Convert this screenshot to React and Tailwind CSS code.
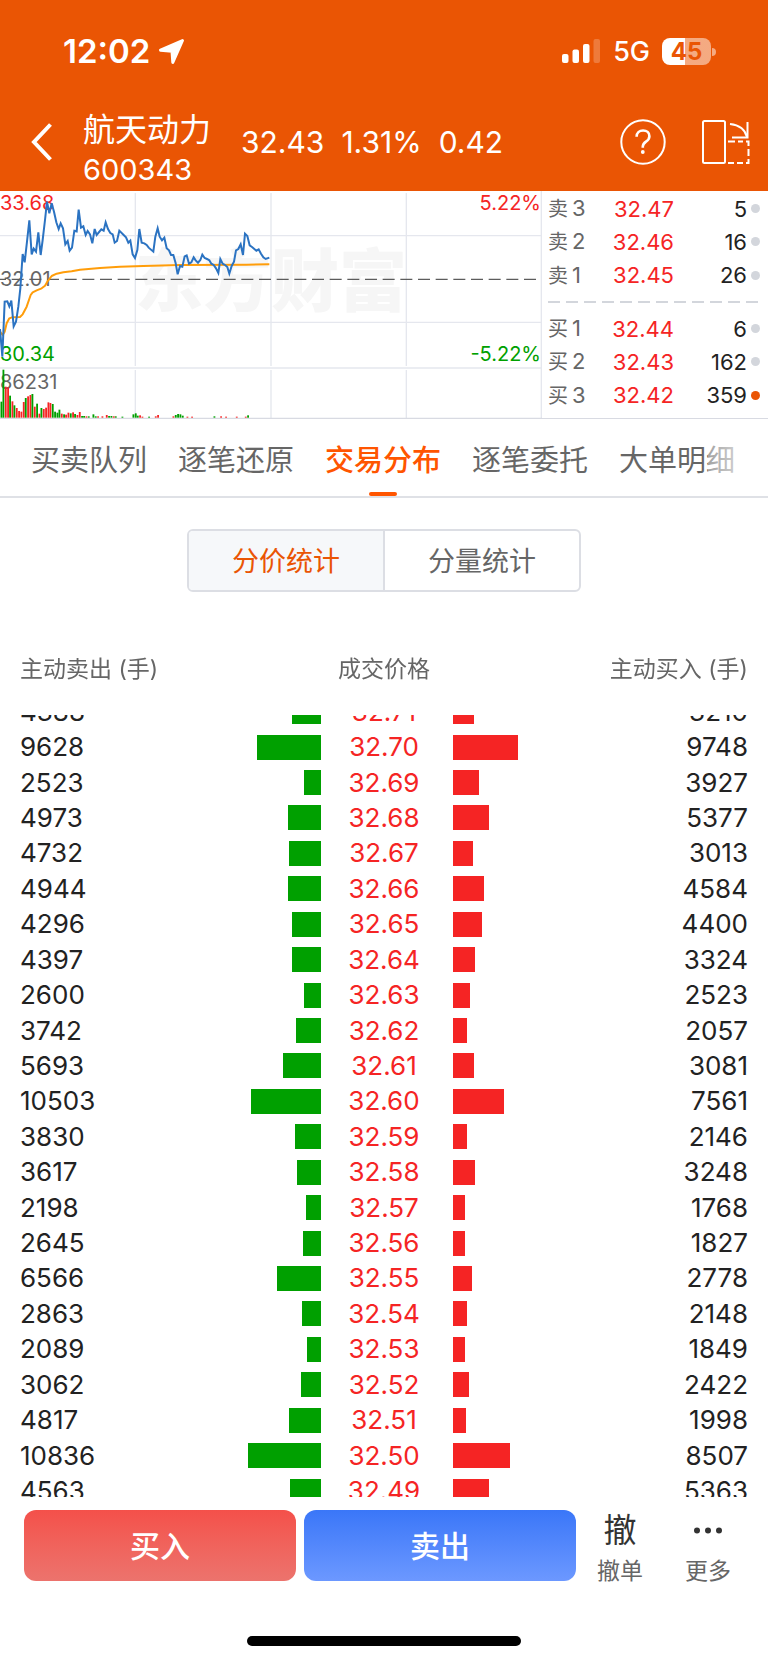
import { useLayoutEffect, useRef, useState } from 'react';

const asks = [
  { label: '卖', level: 3, price: '32.47', qty: 5 },
  { label: '卖', level: 2, price: '32.46', qty: 16 },
  { label: '卖', level: 1, price: '32.45', qty: 26 },
];

const bids = [
  { label: '买', level: 1, price: '32.44', qty: 6 },
  { label: '买', level: 2, price: '32.43', qty: 162 },
  { label: '买', level: 3, price: '32.42', qty: 359, active: true },
];

const tabs = ['买卖队列', '逐笔还原', '交易分布', '逐笔委托', '大单明细'];
const modes = ['分价统计', '分量统计'];

// [active sell, price, active buy]
const rows = [
  [4388, '32.71', 3210],
  [9628, '32.70', 9748],
  [2523, '32.69', 3927],
  [4973, '32.68', 5377],
  [4732, '32.67', 3013],
  [4944, '32.66', 4584],
  [4296, '32.65', 4400],
  [4397, '32.64', 3324],
  [2600, '32.63', 2523],
  [3742, '32.62', 2057],
  [5693, '32.61', 3081],
  [10503, '32.60', 7561],
  [3830, '32.59', 2146],
  [3617, '32.58', 3248],
  [2198, '32.57', 1768],
  [2645, '32.56', 1827],
  [6566, '32.55', 2778],
  [2863, '32.54', 2148],
  [2089, '32.53', 1849],
  [3062, '32.52', 2422],
  [4817, '32.51', 1998],
  [10836, '32.50', 8507],
  [4563, '32.49', 5363],
];
const MAX_VOLUME = 22400;

const priceLine =
  '0,432 7,515 14,350 22,349 28,364 34,347 41,424 48,410 55,365 61,310 68,207 74,232 81,170 88,106 95,208 101,191 108,200 115,142 122,210 128,165 135,105 141,50 148,85 155,55 162,80 169,112 176,132 182,115 189,130 196,178 203,168 209,197 216,188 223,137 230,139 236,74 243,128 250,124 257,150 263,138 270,148 277,175 284,132 290,150 304,133 311,137 317,112 324,132 331,144 338,148 344,173 351,168 358,137 371,150 378,157 385,173 391,167 398,208 405,219 412,195 418,132 425,173 433,175 440,180 446,188 460,200 466,155 473,130 479,155 486,166 493,158 500,190 507,196 513,210 520,210 527,235 533,268 540,243 547,245 554,214 560,211 567,236 574,232 581,217 587,226 594,233 601,225 607,209 614,219 621,222 628,226 634,236 641,240 648,250 655,264 661,222 668,236 675,240 682,246 688,266 695,243 702,230 708,196 715,192 722,178 729,210 735,146 742,153 749,181 756,186 763,192 769,197 776,193 783,206 790,217 797,222 808,218';
const averageLine =
  '0,440 8,450 14,440 20,415 28,400 36,397 60,396 68,388 80,365 92,330 98,322 110,316 125,310 135,302 142,290 155,273 170,266 190,262 215,259 240,254 300,249 360,245 430,243 540,240 740,239 808,238';

// direction, x, height
const volumes =
  'g4,48 g10,144 r17,93 r24,91 g30,66 r37,49 g43,37 r50,29 r57,20 r64,18 r71,47 g77,59 r84,64 r91,68 g97,71 r104,33 g111,42 r118,12 g124,29 r131,26 r138,30 r145,46 r151,44 g158,41 g165,18 g172,15 g178,24 r185,12 g192,10 r198,9 r205,15 g212,13 r219,16 g225,11 r232,8 r239,17 g246,5 g252,5 r259,4 g266,4 g280,10 g287,4 r294,4 r307,4 r320,8 g327,5 g334,5 r341,4 g347,4 g367,3 g400,10 g407,13 g413,6 r420,7 r427,3 g447,3 r467,4 r474,8 r520,4 g527,8 g534,11 g541,10 g548,6 r562,3 r576,3 g643,4 r663,4 r678,3 r710,3 r737,3 g744,7'
    .split(' ')
    .map((v) => {
      const [x, h] = v.slice(1).split(',').map(Number);
      return { up: v[0] === 'r', x, h };
    });

function StatusBar() {
  return (
    <div className="flex h-[103px] items-center pr-[52px] pl-[63px]">
      <span className="text-[33px] leading-none font-semibold">12:02</span>
      <svg
        className="ml-2 h-[27px] w-[27px]"
        viewBox="0 0 27 27"
        fill="currentColor"
        stroke="currentColor"
        strokeWidth="3"
        strokeLinejoin="round"
      >
        <path d="M24.500 2.500 2.500 12.200 14 13.200 14.800 24.500Z" />
      </svg>
      <div className="ml-auto flex items-center">
        <svg className="h-[25px] w-[39px]" viewBox="0 0 39 25" fill="currentColor">
          <rect x="0" y="15" width="6.500" height="9" rx="2" />
          <rect x="10.500" y="10.500" width="6.500" height="13.500" rx="2" />
          <rect x="21" y="5" width="6.500" height="19" rx="2" />
          <rect x="31.500" y="0" width="6.500" height="24" rx="2" opacity=".22" />
        </svg>
        <span className="ml-3 text-[27px] leading-none font-medium">5G</span>
        <div className="ml-3 flex h-[27px] w-[49px] items-center justify-center rounded-lg bg-linear-to-r from-white from-47% to-white/50 to-47% text-2xl leading-none font-bold text-[#ea5504]">
          45
        </div>
        <div className="ml-px h-2 w-1 rounded-r-full bg-white/50" />
      </div>
    </div>
  );
}

function TitleBar() {
  return (
    <div className="flex h-[88px] items-center pr-[17px] pl-[30px]">
      <button type="button" aria-label="返回" className="-mt-[10px]">
        <svg className="h-10 w-6" viewBox="0 0 24 40" fill="none" stroke="currentColor" strokeWidth="4">
          <path d="M20.500 2.500 4 20 20.500 37.500" />
        </svg>
      </button>
      <div className="mt-[5px] ml-[29px] w-[158px]">
        <h1 className="text-[32px] leading-10">航天动力</h1>
        <p className="text-[29px] leading-[39px]">600343</p>
      </div>
      <div className="-mt-[10px] flex gap-[17px] text-3xl">
        <span>32.43</span>
        <span>1.31%</span>
        <span>0.42</span>
      </div>
      <button type="button" aria-label="帮助" className="-mt-[10px] ml-auto">
        <svg className="h-12 w-12" viewBox="0 0 48 48" fill="none" stroke="currentColor" strokeWidth="2">
          <circle cx="24" cy="24" r="21.700" />
          <path d="M17.600 18.800c0-3.800 2.700-6.300 6.500-6.300 3.700 0 6.300 2.300 6.300 5.700 0 2.500-1.100 3.900-3.400 5.400-2.300 1.600-3.200 2.700-3.200 5v1.200" strokeWidth="2.600" />
          <circle cx="23.800" cy="34" r="1.900" fill="currentColor" stroke="none" />
        </svg>
      </button>
      <button type="button" aria-label="横屏" className="-mt-[10px] ml-[34px]">
        <svg className="h-[46px] w-[50px]" viewBox="0 0 50 46" fill="none" stroke="currentColor" strokeWidth="2">
          <rect x="2" y="2" width="22" height="42" rx="1.500" />
          <path d="M29 5c9 1 15 5 17 13" />
          <path d="M46.500 3v15.500H31" />
          <path d="M27 22.500h7M37 22.500h5M45 22.500h2.500V27M47.500 30v7M47.500 40v4H45M42 44h-6M33 44h-6" />
        </svg>
      </button>
    </div>
  );
}

function MiniChart() {
  return (
    <div className="relative h-[228px] flex-1 overflow-hidden text-xl leading-6">
      <div className="absolute inset-x-0 top-9 text-center font-['Noto_Sans_CJK_SC'] text-[68px] leading-[100px] font-black text-[#f6f6f6]">
        东方财富
      </div>
      <span className="absolute top-0 left-0 text-[#f52424]">33.68</span>
      <span className="absolute top-[76px] left-0 text-[#666]">32.01</span>
      <span className="absolute top-[151px] left-0 text-[#00a000]">30.34</span>
      <span className="absolute top-[179px] left-0 text-[#666]">86231</span>
      <span className="absolute top-0 right-px text-[#f52424]">5.22%</span>
      <span className="absolute top-[151px] right-px text-[#00a000]">-5.22%</span>
      <svg
        className="absolute inset-0 h-full w-full"
        viewBox="0 18 1626 684"
        preserveAspectRatio="none"
        fill="none"
      >
        <g stroke="#e5e7ee" strokeWidth="4">
          <path d="M0 152H1624M0 412H1624M0 549H1624" />
          <path d="M406 24V543M813 24V543M1219 24V543M406 555V700M813 555V700M1219 555V700" />
          <path d="M1624 18V700" />
        </g>
        <path d="M0 700H1626" stroke="#d8dae2" strokeWidth="4" />
        <path d="M-18 283H1624" stroke="#5c5c5c" strokeWidth="4" strokeDasharray="36 17" />
        {volumes.map((v) => (
          <rect key={v.x} x={v.x - 2.5} y={698 - v.h} width="5.500" height={v.h} fill={v.up ? '#f52424' : '#00a000'} />
        ))}
        <polyline points={averageLine} stroke="#ff9d0a" strokeWidth="6" strokeLinejoin="round" />
        <polyline points={priceLine} stroke="#2b73c2" strokeWidth="6" />
      </svg>
    </div>
  );
}

function BookSide({ levels }) {
  return (
    <table className="h-[100px] w-full table-fixed text-[22px] leading-6">
      <tbody>
        {levels.map((l) => (
          <tr key={l.price}>
            <th scope="row" className="w-14 p-0 text-left font-normal text-[#666]">
              <span className="mr-1 text-xl leading-6">{l.label}</span>
              {l.level}
            </th>
            <td className="w-[70px] p-0 text-right text-[#f52424]">{l.price}</td>
            <td className="p-0">
              <div className="flex items-center justify-end gap-1 text-[#222]">
                {l.qty}
                <span className={`h-[9px] w-[9px] rounded-full ${l.active ? 'bg-[#ea5504]' : 'bg-[#d3d6dc]'}`} />
              </div>
            </td>
          </tr>
        ))}
      </tbody>
    </table>
  );
}

function OrderBook() {
  return (
    <div className="w-[226px] border-b border-[#d8dae2] pt-px pr-2 pl-[6px]">
      <BookSide levels={asks} />
      <svg className="h-5 w-full" stroke="#d3d6dc" strokeWidth="2">
        <line x1="0" y1="10" x2="100%" y2="10" strokeDasharray="12 6" />
      </svg>
      <BookSide levels={bids} />
    </div>
  );
}

function Distribution() {
  const scroller = useRef(null);

  // the list opens part way into the first row
  useLayoutEffect(() => {
    scroller.current.scrollTop = 21;
  }, []);

  return (
    <div ref={scroller} className="mt-[30px] min-h-0 flex-1 overflow-y-auto px-5 [scrollbar-width:none]">
      <table className="h-[908px] w-full table-fixed text-[26px] leading-8 text-[#222]">
        <thead className="sticky top-0 z-10 bg-white text-[23px] text-[#666]">
          <tr className="h-[93px]">
            <th scope="col" className="p-0 text-left font-normal whitespace-nowrap">主动卖出 (手)</th>
            <td className="w-[150px] p-0" />
            <th scope="col" className="w-[132px] p-0 pr-[6px] font-normal">成交价格</th>
            <td className="w-[150px] p-0" />
            <th scope="col" className="w-[145px] p-0 text-right font-normal whitespace-nowrap">主动买入 (手)</th>
          </tr>
        </thead>
        <tbody>
          {rows.map(([sell, price, buy]) => (
            <tr key={price}>
              <td className="p-0">{sell}</td>
              <td className="p-0">
                <div className="ml-auto h-[25px] bg-[#00a000]" style={{ width: `${(sell / MAX_VOLUME) * 100}%` }} />
              </td>
              <td className="p-0 pr-[6px] text-center text-[#f52424]">{price}</td>
              <td className="p-0">
                <div className="h-[25px] bg-[#f52424]" style={{ width: `${(buy / MAX_VOLUME) * 100}%` }} />
              </td>
              <td className="p-0 text-right">{buy}</td>
            </tr>
          ))}
        </tbody>
      </table>
    </div>
  );
}

function App() {
  const [tab, setTab] = useState('交易分布');
  const [mode, setMode] = useState('分价统计');

  return (
    <div className="flex h-screen flex-col bg-white font-['Inter','Noto_Sans_CJK_SC',sans-serif]">
      <header className="bg-[#ea5504] text-white">
        <StatusBar />
        <TitleBar />
      </header>

      <section className="flex">
        <MiniChart />
        <OrderBook />
      </section>

      <nav className="relative flex h-[79px] shrink-0 gap-[31px] overflow-hidden border-b-2 border-[#dfe1e6] pl-[31px] text-[29px] whitespace-nowrap">
        {tabs.map((t) => (
          <button
            key={t}
            type="button"
            onClick={() => setTab(t)}
            className={`relative pt-[6px] ${t === tab ? 'font-medium text-[#ff5500]' : 'text-[#666]'}`}
          >
            {t}
            {t === tab && (
              <span className="absolute bottom-0 left-1/2 h-1 w-7 -translate-x-1/2 rounded-full bg-[#ff5500]" />
            )}
          </button>
        ))}
        <div className="pointer-events-none absolute inset-y-0 right-0 w-[60px] bg-linear-to-r from-white/40 to-white" />
      </nav>

      <div className="mx-auto mt-[31px] flex h-[63px] w-[394px] shrink-0 overflow-hidden rounded-md border-2 border-[#dcdee4] text-[27px]">
        {modes.map((m) => (
          <button
            key={m}
            type="button"
            onClick={() => setMode(m)}
            className={`flex-1 border-[#dcdee4] pt-1 not-first:border-l-2 ${m === mode ? 'bg-[#f6f8fa] text-[#ea5504]' : 'text-[#666]'}`}
          >
            {m}
          </button>
        ))}
      </div>

      <Distribution />

      <footer className="shrink-0 bg-white pt-[13px] pb-[17px]">
        <div className="flex items-start pr-9 pl-6">
          <button
            type="button"
            className="h-[71px] flex-1 rounded-xl bg-linear-to-b from-[#f4504a] to-[#ec736d] text-3xl font-medium text-white"
          >
            买入
          </button>
          <button
            type="button"
            className="ml-2 h-[71px] flex-1 rounded-xl bg-linear-to-b from-[#3a76f8] to-[#6c98ff] text-3xl font-medium text-white"
          >
            卖出
          </button>
          <button type="button" className="ml-5 flex w-12 flex-col items-center text-[23px] text-[#666]">
            <span className="text-[33px] leading-[41px] text-[#333]">撤</span>
            <span className="leading-10">撤单</span>
          </button>
          <button type="button" className="ml-10 flex w-12 flex-col items-center text-[23px] text-[#666]">
            <svg className="h-[41px] w-[30px]" viewBox="0 0 30 41" fill="#333">
              <circle cx="4" cy="20.500" r="3" />
              <circle cx="15" cy="20.500" r="3" />
              <circle cx="26" cy="20.500" r="3" />
            </svg>
            <span className="leading-10">更多</span>
          </button>
        </div>
        <div className="mx-auto mt-[45px] h-[10px] w-[274px] rounded-full bg-black" />
      </footer>
    </div>
  );
}

export default App;
